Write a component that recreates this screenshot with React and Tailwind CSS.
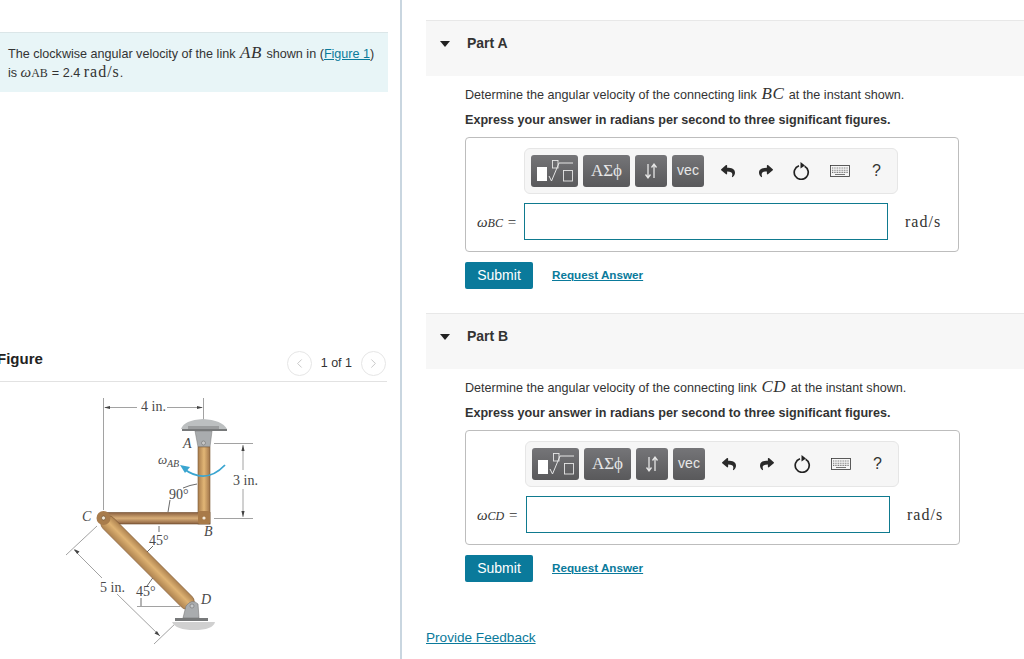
import React from "react";
import { FaReply, FaShare } from "react-icons/fa";
import { ChevronLeft, ChevronRight } from "lucide-react";

const SERIF = "font-['Liberation_Serif',serif]";

// pinned-link figure, drawn in page coordinates
const Mechanism = () => (
  <svg viewBox="60 385 220 274" className="mt-[3px] ml-[60px] block h-[274px] w-[220px]">
    <defs>
      <linearGradient id="linkV" x1="0" x2="1" y1="0" y2="0">
        <stop offset="0" stopColor="#a87c4c" />
        <stop offset="0.5" stopColor="#e2b676" />
        <stop offset="1" stopColor="#a0744a" />
      </linearGradient>
      <linearGradient id="linkH" x1="0" x2="0" y1="0" y2="1">
        <stop offset="0" stopColor="#8a6040" />
        <stop offset="0.5" stopColor="#d8ae78" />
        <stop offset="1" stopColor="#8a6040" />
      </linearGradient>
      <linearGradient id="linkD" x1="0" x2="1" y1="0" y2="0">
        <stop offset="0" stopColor="#ad8250" />
        <stop offset="0.55" stopColor="#deb272" />
        <stop offset="1" stopColor="#ad8250" />
      </linearGradient>
    </defs>

    {/* dimension lines */}
    <g stroke="#8a8a8a" strokeWidth="0.8" fill="none">
      <path d="M103.5 398V510M203.5 398V425" />
      <path d="M105 407.5H137M167 407.5H202" />
      <path d="M214 443.5H253M214 518.5H253M243 445V470M243 489V517" />
      <path d="M66 555L97 526M154 644L177 622" />
      <path d="M74 550L102 578M117 594L160 636" />
      <path d="M137 606.5H180" />
    </g>
    <g fill="#444">
      <path d="M104 407.5l6-1.6v3.2zM203 407.5l-6-1.6v3.2z" />
      <path d="M243 445l-1.6 6h3.2zM243 517l-1.6-6h3.2z" />
      <path d="M74 549l5.5 2.6-2.4 2.4zM160 636l-5.5-2.6 2.4-2.4z" />
    </g>
    <g stroke="#444" strokeWidth="0.8" fill="none">
      <path d="M170 500L168 512M183 488Q190 485 197 484" />
      <path d="M159 526V532M153 546L147 552M152.7 578L147 586M141 598V606" />
    </g>

    {/* top support */}
    <path d="M181 429Q184 420 203 419Q222 420 227 429Z" fill="#bcbfc0" />
    <path d="M182 429H227V431H182Z" fill="#77797a" />
    <path d="M188 426H219V429H188Z" fill="#9a9c9d" />
    <path d="M195 431H212L210 447H198Z" fill="#a9acae" stroke="#777" strokeWidth="0.5" />

    {/* links */}
    <rect x="198" y="447" width="12" height="77" fill="url(#linkV)" stroke="#7c5a36" strokeWidth="0.6" />
    <rect x="105" y="512.5" width="105" height="11.5" fill="url(#linkH)" stroke="#6d4a2a" strokeWidth="0.6" />
    <g transform="rotate(-45 103 518)">
      <rect x="95.5" y="518" width="15" height="126" rx="7.5" fill="url(#linkD)" stroke="#7a5430" strokeWidth="0.6" />
    </g>
    <circle cx="103.5" cy="518" r="7" fill="#a87c4c" />
    <circle cx="103.5" cy="518" r="2" fill="#f3ead8" stroke="#5b4022" strokeWidth="0.5" />
    <rect x="198" y="511" width="12" height="13" rx="2" fill="#a87a48" />
    <circle cx="204" cy="518" r="1.6" fill="#f3ead8" />

    {/* bottom support */}
    <path d="M172 622H215Q213 630 194 630Q176 630 172 622Z" fill="#d0d0d0" />
    <path d="M175 618H208V621H175Z" fill="#77797a" />
    <path d="M183 618L186 606Q192 598 198 604L199 618Z" fill="#a9acae" stroke="#777" strokeWidth="0.6" />
    <circle cx="192" cy="606" r="2" fill="#c6c9ca" stroke="#666" strokeWidth="0.5" />
    <circle cx="203.5" cy="443" r="2" fill="#c8c8c8" stroke="#666" strokeWidth="0.5" />

    {/* rotation arrow */}
    <path d="M225 465Q206 485 184 469" stroke="#3aa5d0" strokeWidth="1.8" fill="none" />
    <path d="M180 465L190 467L185 473Z" fill="#3aa5d0" />

    <g fontFamily="Liberation Serif, serif" fill="#4a4a4a" fontSize="14">
      <text x="141" y="411">4 in.</text>
      <text x="233" y="485">3 in.</text>
      <text x="100" y="592">5 in.</text>
      <text x="169" y="499">90°</text>
      <text x="149" y="545">45°</text>
      <text x="136" y="596">45°</text>
      <g fontStyle="italic">
        <text x="183" y="448">A</text>
        <text x="82" y="521">C</text>
        <text x="204" y="536">B</text>
        <text x="201" y="604">D</text>
        <text x="158" y="464" fontSize="13">ω</text>
        <text x="167" y="467" fontSize="10">AB</text>
      </g>
    </g>
  </svg>
);

const RadicalIcon = () => (
  <svg viewBox="0 0 47 32" className="h-[32px] w-[47px]" fill="none" stroke="#e6e6e6">
    <rect x="6" y="12" width="10" height="14" fill="#fff" stroke="none" />
    <rect x="21.5" y="5.5" width="5.5" height="7.5" strokeWidth="0.9" />
    <path d="M18 21l2.5 5L28 8H42" strokeWidth="1" />
    <rect x="32.5" y="15.5" width="9" height="10.5" strokeWidth="0.9" />
  </svg>
);

const SortIcon = () => (
  <svg viewBox="0 0 14 18" className="h-[18px] w-[14px]" fill="none" stroke="#e6e6e6" strokeWidth="1.3">
    <path d="M4 2V15M1.5 12.5L4 16L6.5 12.5" />
    <path d="M10 16V3M7.5 5.5L10 2L12.5 5.5" />
  </svg>
);

const ResetIcon = () => (
  <svg viewBox="0 0 18 18" className="h-[18px] w-[18px]" fill="none">
    <path d="M11.6 4.2A7 7 0 1 1 6 3.7" stroke="#222" strokeWidth="1.7" />
    <path d="M7.5 0L12 3.4L7.5 6.4Z" fill="#222" />
  </svg>
);

const KeyboardIcon = () => (
  <svg viewBox="0 0 20 12" className="h-[12px] w-[20px]" fill="none">
    <rect x="0.5" y="0.5" width="19" height="11" fill="#f6f6f6" stroke="#333" strokeWidth="0.8" />
    <path d="M2 3H18M2 5.2H18M2 7.4H18" stroke="#777" strokeWidth="1.1" strokeDasharray="1 0.7" />
    <path d="M5 9.5H15" stroke="#777" strokeWidth="1" />
  </svg>
);

const ToolButton = ({ className, children }) => (
  <div
    className={`flex h-[32px] items-center justify-center rounded-[3px] bg-gradient-to-b from-[#757578] to-[#59595b] text-white/85 ${className}`}
  >
    {children}
  </div>
);

const Toolbar = ({ wide }) => (
  <div
    className={`flex h-[46px] w-[374px] items-center rounded-[6px] border border-[#e6e6e6] bg-[#f6f6f6] pl-[6px] ${
      wide ? "ml-[59px]" : "ml-[58px]"
    }`}
  >
    <ToolButton className="w-[47px]">
      <RadicalIcon />
    </ToolButton>
    <ToolButton className={`ml-[5px] w-[47px] text-[17px] ${SERIF}`}>ΑΣϕ</ToolButton>
    <ToolButton className="ml-[5px] w-[32px]">
      <SortIcon />
    </ToolButton>
    <ToolButton className="ml-[5px] w-[32px] pb-[2px] text-[14px]">vec</ToolButton>
    <FaReply className="ml-[17px] text-[14px] text-[#2a2a2a]" />
    <FaShare className="ml-[24px] text-[14px] text-[#2a2a2a]" />
    <div className="ml-[20px]">
      <ResetIcon />
    </div>
    <div className="ml-[19px]">
      <KeyboardIcon />
    </div>
    <span className="ml-[22px] text-[16px] text-[#333]">?</span>
  </div>
);

const Part = ({ name, sub, link, wide }) => (
  <section>
    <div className="flex h-[56px] items-center border-t border-[#e8e8e8] bg-[#f7f7f7] pb-[10px] pl-[14px]">
      <span className="h-0 w-0 border-x-[5.5px] border-t-[6px] border-x-transparent border-t-[#222]" />
      <span className="ml-[17px] text-[14px] font-bold text-[#333]">{name}</span>
    </div>
    <div className="pl-[39px]">
      <p className="mt-[9px] text-[12.6px] leading-[18px] text-[#333]">
        Determine the angular velocity of the connecting link{" "}
        <span className={`${SERIF} mx-[1px] text-[17px] tracking-[0.6px] italic`}>{link}</span> at the instant shown.
      </p>
      <p className="mt-[7px] text-[12.6px] leading-[18px] font-bold text-[#333]">
        Express your answer in radians per second to three significant figures.
      </p>
      <div
        className={`mt-[8px] h-[115px] rounded-[4px] border border-[#bdbdbd] pt-[10px] ${
          wide ? "w-[495px]" : "w-[494px]"
        }`}
      >
        <Toolbar wide={wide} />
        <div className="mt-[9px] flex items-center">
          <span
            className={`ml-[11px] pt-[2px] text-[15px] whitespace-nowrap text-[#333] ${SERIF} ${
              wide ? "w-[49px]" : "w-[47px]"
            }`}
          >
            <i>ω</i>
            <i className="text-[12px]">{sub}</i> <span className="ml-[1px]">=</span>
          </span>
          <div className="h-[37px] w-[364px] border border-[#0f7a8f] bg-white" />
          <span className={`ml-[17px] text-[16px] tracking-[1px] text-[#333] ${SERIF}`}>rad/s</span>
        </div>
      </div>
      <div className="mt-[10px] flex items-center">
        <button className="h-[27px] w-[68px] rounded-[2px] bg-[#0a7a9b] text-[14px] text-white">
          Submit
        </button>
        <a className="mt-[-2px] ml-[19px] text-[11.7px] font-bold text-[#0a7a9b] underline">Request Answer</a>
      </div>
    </div>
  </section>
);

const PagerButton = ({ children }) => (
  <div className="flex h-[25px] w-[25px] items-center justify-center rounded-full border border-[#e6e6e6] text-[#c4c4c4]">
    {children}
  </div>
);

export default function App() {
  return (
    <div className="flex h-[659px] w-[1024px] overflow-hidden bg-white font-['Liberation_Sans',Arial,sans-serif]">
      <div className="h-full w-[402px] shrink-0 border-r-2 border-[#c9d6e0] pt-[32px]">
        <div className="flex h-[60px] w-[388px] flex-col justify-center border-t border-[#dbe6e8] bg-[#e8f5f7] pl-[8px] text-[12.6px] leading-[17px] text-[#333]">
          <p>
            The clockwise angular velocity of the link{" "}
            <span className={`${SERIF} mx-[1px] text-[17px] tracking-[0.6px] italic`}>AB</span> shown in (
            <a className="text-[#0a7a9b] underline">Figure 1</a>)
          </p>
          <p>
            is <span className={`${SERIF} text-[15px] italic`}>ω</span>
            <span className={`${SERIF} text-[12px]`}>AB</span>
            <span className="ml-[4px]">= 2.4</span>{" "}
            <span className={`${SERIF} text-[16px] tracking-[1px]`}>rad/s</span>.
          </p>
        </div>
        <div className="mt-[258px] flex h-[32px] w-[387px] items-start justify-between border-b border-[#e2e2e2] pr-[1px]">
          <h2 className="mt-[-1px] ml-[-3px] text-[15px] leading-[20px] font-bold text-[#222]">Figure</h2>
          <div className="mt-[1px] flex items-center text-[12.5px] text-[#333]">
            <PagerButton>
              <ChevronLeft size={15} strokeWidth={1.5} />
            </PagerButton>
            <span className="mx-[9px]">1 of 1</span>
            <PagerButton>
              <ChevronRight size={15} strokeWidth={1.5} />
            </PagerButton>
          </div>
        </div>
        <Mechanism />
      </div>
      <div className="flex-1 pt-[20px] pl-[24px]">
        <Part name="Part A" sub="BC" link="BC" />
        <div className="h-[24px]" />
        <Part name="Part B" sub="CD" link="CD" wide />
        <a className="mt-[46px] block text-[13.6px] text-[#0a7a9b] underline">Provide Feedback</a>
      </div>
    </div>
  );
}
